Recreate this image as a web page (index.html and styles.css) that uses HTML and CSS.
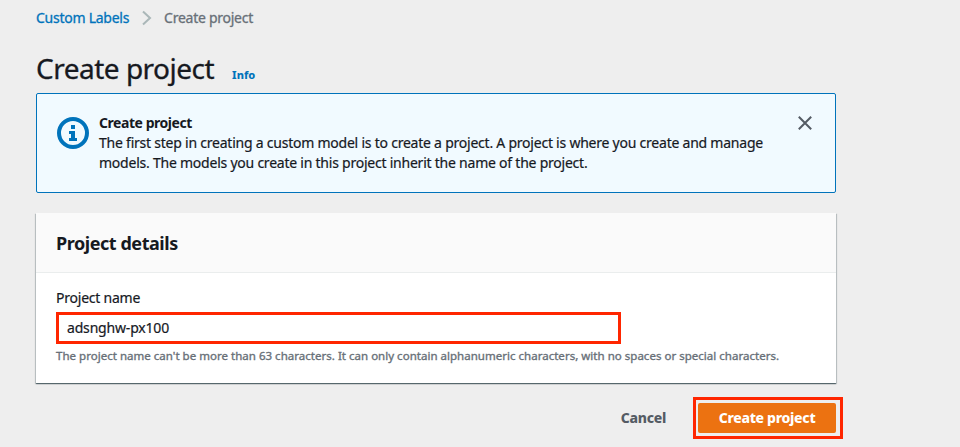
FILE: index.html
```html
<!DOCTYPE html>
<html lang="en">
<head>
<meta charset="utf-8">
<title>Create project</title>
<link rel="stylesheet" href="styles.css">
</head>
<body>
<main class="page">
  <nav class="crumbs">
    <a class="crumb-link">Custom Labels</a>
    <svg class="chevron" width="10" height="16" viewBox="0 0 10 16"><path d="M1 1.500 8 8l-7 6.500"/></svg>
    <span class="crumb-current">Create project</span>
  </nav>
  <header class="heading">
    <h1>Create project</h1>
    <a class="info">Info</a>
  </header>
  <section class="notice">
    <svg class="notice-icon" width="34" height="34" viewBox="0 0 34 34"><circle cx="17" cy="17" r="14"/><path d="M15 9h4v4h-4zM13 15h6v7h2v3h-8v-3h2v-4h-2z"/></svg>
    <div class="notice-text">
      <strong>Create project</strong>
      <p>The first step in creating a custom model is to create a project. A project is where you create and manage<br>models. The models you create in this project inherit the name of the project.</p>
    </div>
    <svg class="close" width="14" height="14" viewBox="0 0 14 14"><path d="M.8.8l12.400 12.400M13.200.8.8 13.200"/></svg>
  </section>
  <section class="card">
    <div class="card-head"><h2>Project details</h2></div>
    <div class="card-body">
      <label for="name">Project name</label>
      <input id="name" type="text" value="adsnghw-px100">
      <p class="hint">The project name can't be more than 63 characters. It can only contain alphanumeric characters, with no spaces or special characters.</p>
    </div>
  </section>
  <footer class="actions">
    <button class="cancel">Cancel</button>
    <div class="highlight"><button class="primary">Create project</button></div>
  </footer>
</main>
</body>
</html>
```
FILE: styles.css
```css
* { box-sizing: border-box; }
body { margin: 0; background: #eeeeee; font: 14px/20px "Noto Sans", sans-serif; letter-spacing: -0.23px; color: #16191f; overflow: hidden; }
h1, h2, p { margin: 0; }
.page { width: 807px; padding: 8px 0 0 36px; box-sizing: content-box; }
.crumbs { display: flex; align-items: center; height: 20px; letter-spacing: -0.26px; -webkit-text-stroke: 0.3px; }
.crumb-link { color: #0073bb; }
.chevron { margin: 0 12px 0 13px; fill: none; stroke: #aab7b8; stroke-width: 2; -webkit-text-stroke: 0; }
.crumb-current { color: #687078; }
.heading { display: flex; align-items: baseline; height: 65px; padding-top: 22px; }
h1 { font-size: 28px; line-height: 36px; font-weight: 400; letter-spacing: -0.5px; -webkit-text-stroke: 0.3px; }
.info { margin-left: 18px; font-size: 11px; font-weight: 800; letter-spacing: 0; color: #0073bb; }
.notice { display: flex; align-items: flex-start; width: 800px; height: 100px; padding: 19px 20px; border: 1px solid #0073bb; border-radius: 2px; background: #f1faff; }
.notice-icon { margin-top: 3px; margin-left: -1px; fill: #0073bb; }
.notice-icon circle { fill: none; stroke: #0073bb; stroke-width: 4; }
.notice-text { margin-left: 9px; width: 690px; white-space: nowrap; -webkit-text-stroke: 0.2px; }
.notice-text strong { display: block; letter-spacing: -0.45px; -webkit-text-stroke: 0; }
.close { margin: 3px 0 0 9px; fill: none; stroke: #545b64; stroke-width: 2; }
.card { width: 800px; height: 170px; margin-top: 20px; background: #fff; box-shadow: 0 1px 1px #001c2480, 1px 1px 1px #001c2426, -1px 1px 1px #001c2426; }
.card-head { height: 60px; padding: 19px 20px; background: #fafafa; border-bottom: 1px solid #eaeded; }
h2 { font-size: 18px; line-height: 22px; font-weight: 700; letter-spacing: -0.45px; }
.card-body { padding: 15px 20px; }
label { display: block; -webkit-text-stroke: 0.2px; }
input { display: block; width: 565px; height: 32px; margin-top: 4px; padding: 0 8px 2px; border: 3px solid #ff2600; color: inherit; font: inherit; letter-spacing: -0.18px; -webkit-text-stroke: 0.2px; background: #fff; }
.hint { margin-top: 2px; font-size: 11.5px; letter-spacing: 0.02px; -webkit-text-stroke: 0.35px; color: #687078; white-space: nowrap; }
.actions { display: flex; justify-content: flex-end; align-items: center; margin-top: 14px; }
button { border: 0; padding: 0; font: 800 14px/20px "Noto Sans", sans-serif; letter-spacing: -0.3px; }
.cancel { background: none; color: #545b64; margin-right: 27px; }
.highlight { width: 150px; height: 42px; padding: 3px 4px 3px 2px; border: 3px solid #ff2600; }
.primary { width: 100%; height: 100%; background: #ec7211; color: #fff; border-radius: 2px; }
```
